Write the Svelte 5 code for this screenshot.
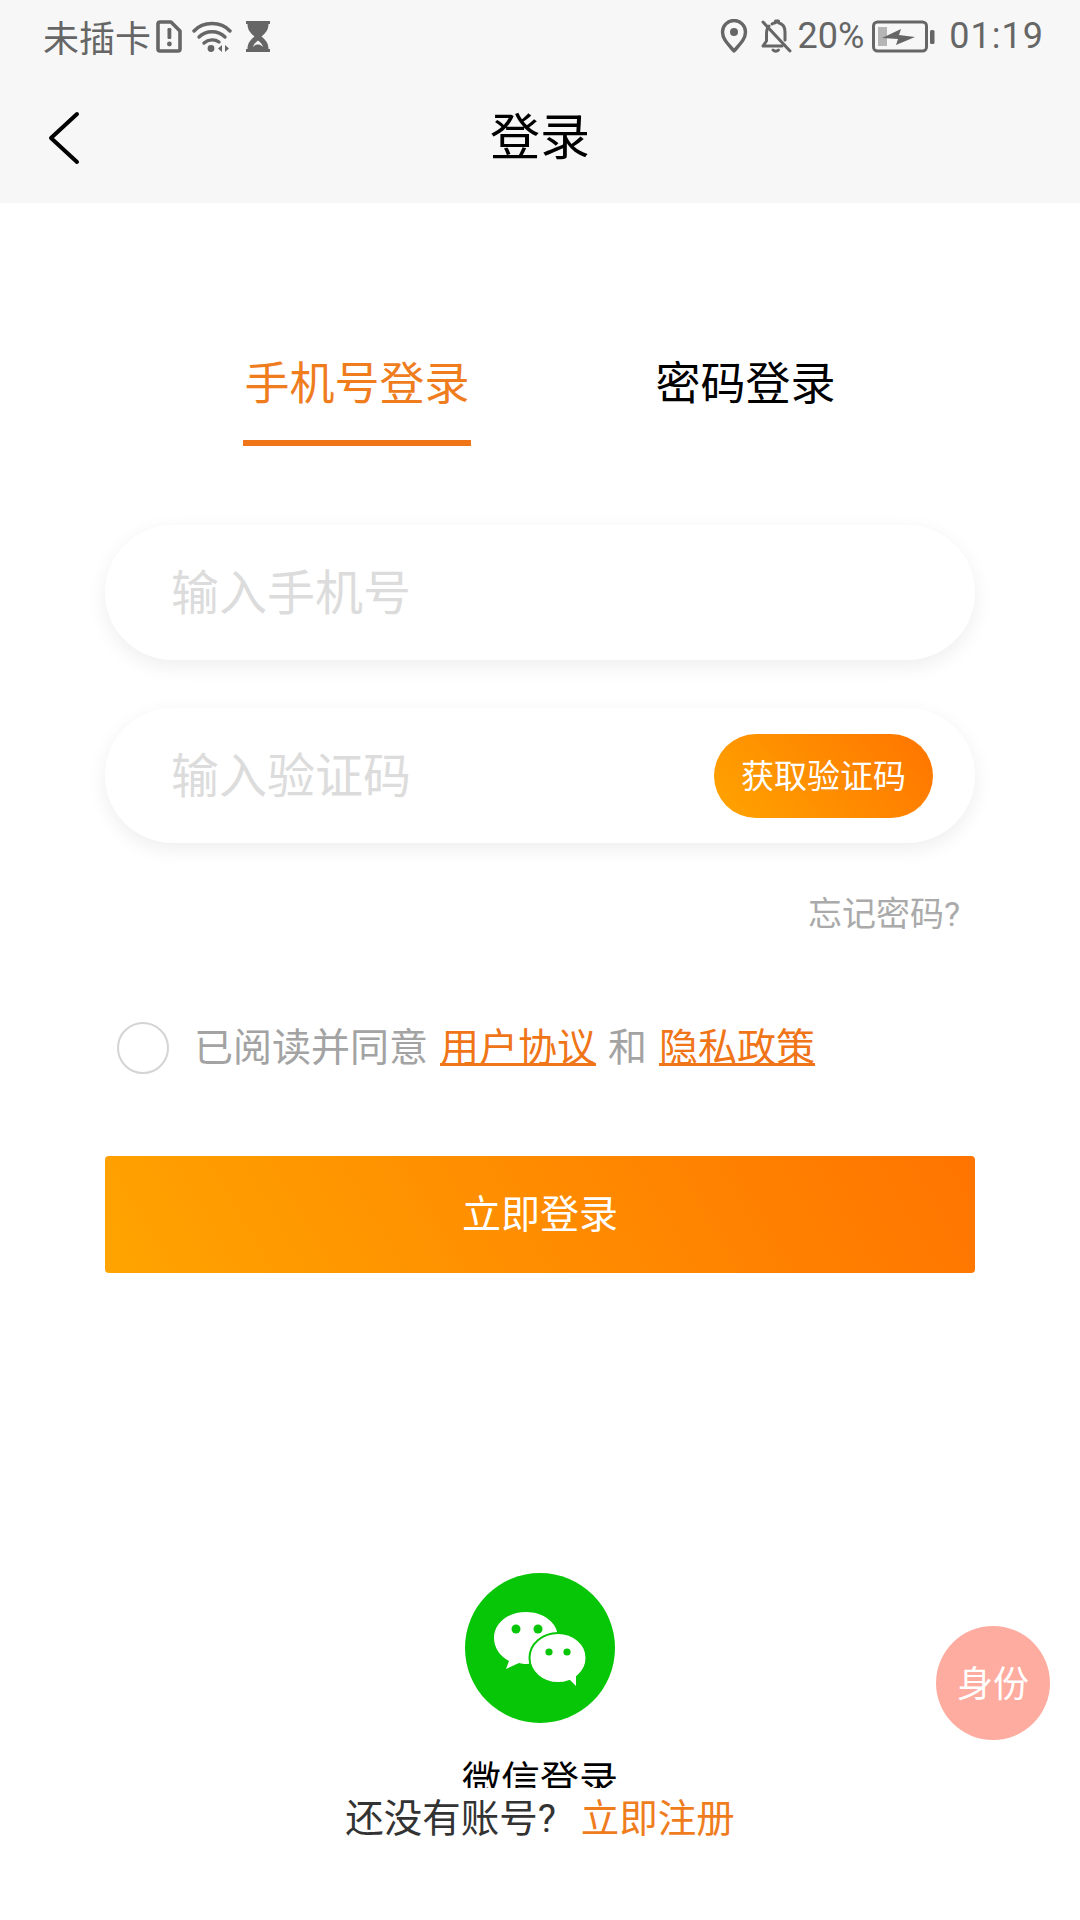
<script>
let phone = $state('');
let code = $state('');
let agreed = $state(false);
let mode = $state('phone');
</script>

<div class="page">
    <div class="topbar">
        <div class="status">
            <span class="carrier">未插卡</span>
            <svg class="ic sim" viewBox="0 0 26 33" width="26" height="33">
                <path d="M4 2h11l9 9v18a2 2 0 0 1-2 2H4a2 2 0 0 1-2-2V4a2 2 0 0 1 2-2z" fill="none" stroke="#666" stroke-width="3.600" stroke-linejoin="round"/>
                <rect x="11.500" y="8" width="3.800" height="11" rx="1.200" fill="#666"/>
                <circle cx="13.400" cy="24" r="2.400" fill="#666"/>
            </svg>
            <svg class="ic wifi" viewBox="0 0 40 33" width="40" height="33">
                <g fill="none" stroke="#666" stroke-width="3.400" stroke-linecap="round">
                    <path d="M2 11C11 1 29 1 38 11"/>
                    <path d="M7 17c7-7 19-7 26 0"/>
                    <path d="M12 23c4.500-4 11-4 15-1"/>
                </g>
                <circle cx="19" cy="28.500" r="3.400" fill="#666"/>
                <path d="M30 25v7l-4-3.500zM33 25v7l4-3.500z" fill="#666"/>
            </svg>
            <svg class="ic glass" viewBox="0 0 26 33" width="26" height="33">
                <path d="M1 1h24v3h-1.500c0 6-3 9-7 12.500 4 3.500 7 6.500 7 12.500H25v3H1v-3h1.500c0-6 3-9 7-12.500-4-3.500-7-6.500-7-12.500H1z" fill="#666"/>
                <path d="M13 20.500c-2.500 2-4.500 4-5 6.500 2-2 3.500-2.500 5-2.500s3 .5 5 2.500c-.5-2.500-2.500-4.500-5-6.500z" fill="#f7f7f7"/>
            </svg>
            <span class="spacer"></span>
            <svg class="ic pin" viewBox="0 0 28 34" width="28" height="34">
                <path d="M14 32C8 25 2.500 20 2.500 13a11.500 11.500 0 0 1 23 0C25.500 20 20 25 14 32z" fill="none" stroke="#666" stroke-width="3.400" stroke-linejoin="round"/>
                <circle cx="14" cy="13" r="4" fill="#666"/>
            </svg>
            <svg class="ic bell" viewBox="0 0 32 34" width="32" height="34">
                <g fill="none" stroke="#666" stroke-width="3" stroke-linecap="round" stroke-linejoin="round">
                    <path d="M9 7c-2 2-2.500 5-2.500 8v7L3 27h19"/>
                    <path d="M12 5c1-.6 2-1 3.500-1.200V2h3v1.800c4 1 6.500 4.500 6.500 9.200v8"/>
                    <path d="M3 3l27 29"/>
                    <path d="M13 31c1.500 1.500 4 1.500 5.500 0"/>
                </g>
            </svg>
            <span class="pct">20%</span>
            <svg class="ic batt" viewBox="0 0 63 33" width="63" height="33">
                <rect x="1.500" y="2" width="53" height="29" rx="4" fill="none" stroke="#666" stroke-width="3"/>
                <rect x="6" y="7" width="9" height="19" fill="#b5b5b5"/>
                <path d="M10 18L29 9l-2 6 16 2-19 8 2-6z" fill="#666"/>
                <rect x="58" y="10" width="4.500" height="14" rx="1.500" fill="#666"/>
            </svg>
            <span class="time">01:19</span>
        </div>
        <div class="nav">
            <svg class="back" viewBox="0 0 34 54" width="34" height="54">
                <path d="M30 3L4 27l26 24" fill="none" stroke="#000" stroke-width="4" stroke-linecap="round" stroke-linejoin="round"/>
            </svg>
            <span class="title">登录</span>
        </div>
    </div>

    <div class="tabs">
        <button class="tab" class:on={mode === 'phone'} onclick={() => mode = 'phone'}>手机号登录</button>
        <button class="tab" class:on={mode === 'pwd'} onclick={() => mode = 'pwd'}>密码登录</button>
    </div>

    <div class="form">
        <div class="field">
            <input type="text" placeholder="输入手机号" bind:value={phone}/>
        </div>
        <div class="field second">
            <input type="text" placeholder="输入验证码" bind:value={code}/>
            <button class="getcode">获取验证码</button>
        </div>
        <div class="forgot">忘记密码?</div>
        <div class="agree">
            <button class="check" class:checked={agreed} aria-label="同意" onclick={() => agreed = !agreed}></button>
            <span class="hint">已阅读并同意</span>
            <span class="link">用户协议</span>
            <span class="hint">和</span>
            <span class="link">隐私政策</span>
        </div>
        <button class="login">立即登录</button>
    </div>

    <div class="wechat">
        <svg viewBox="0 0 150 150" width="150" height="150">
            <circle cx="75" cy="75" r="75" fill="#07c507"/>
            <path d="M61 39c-18 0-32 11-32 26 0 10 6 18 15 23l-3 8 13-6c3 .8 5 1 7 1 18 0 32-11 32-26S79 39 61 39z" fill="#fff"/>
            <ellipse cx="93" cy="85" rx="28.500" ry="25" fill="#fff" stroke="#07c507" stroke-width="2"/>
            <path d="M104 106l7 7 0-11z" fill="#fff"/>
            <circle cx="51" cy="56" r="4.500" fill="#07c507"/>
            <circle cx="73" cy="56" r="4.500" fill="#07c507"/>
            <circle cx="84" cy="79" r="3.600" fill="#07c507"/>
            <circle cx="102" cy="79" r="3.600" fill="#07c507"/>
        </svg>
        <div class="wxlabel">微信登录</div>
    </div>

    <div class="register">
        <span>还没有账号?</span>
        <span class="reg">立即注册</span>
    </div>

    <div class="fab">身份</div>
</div>

<style>
    :global(body) {
        margin: 0;
        background: #fff;
    }
    .page {
        position: relative;
        width: 1080px;
        height: 1920px;
        overflow: hidden;
        background: #fff;
        font-family: Roboto, "Noto Sans CJK SC", sans-serif;
    }
    .topbar {
        background: #f7f7f7;
        height: 203px;
    }
    .status {
        display: flex;
        align-items: center;
        height: 72px;
        padding: 0 36px 0 43px;
        color: #666;
        font-size: 36px;
        box-sizing: border-box;
    }
    .ic {
        display: block;
        flex: none;
    }
    .sim { margin-left: 5px; }
    .wifi { margin-left: 10px; }
    .glass { margin-left: 13px; }
    .spacer { flex: 1; }
    .bell { margin-left: 12px; }
    .pct { margin-left: 6px; font-size: 36px; }
    .batt { margin-left: 8px; }
    .time { margin-left: 14px; font-size: 36px; letter-spacing: 1px; }
    .nav {
        position: relative;
        display: flex;
        align-items: center;
        justify-content: center;
        height: 131px;
    }
    .back {
        position: absolute;
        left: 47px;
        top: 39px;
    }
    .title {
        font-size: 50px;
        color: #000;
        line-height: 60px;
    }
    .tabs {
        display: flex;
        justify-content: center;
        gap: 184px;
        padding-top: 152px;
    }
    button {
        font-family: inherit;
        border: none;
        background: none;
        padding: 0;
    }
    .tab {
        font-size: 45px;
        line-height: 60px;
        padding: 0 1px 25px;
        border-bottom: 6px solid transparent;
        color: #000;
    }
    .tab.on {
        color: #ef7d1e;
        border-bottom-color: #ef7518;
    }
    .form {
        margin: 79px 105px 0;
    }
    .field {
        display: flex;
        align-items: center;
        height: 135px;
        border-radius: 68px;
        background: #fff;
        box-shadow: 0 6px 20px rgba(0, 0, 0, 0.07);
        padding: 0 42px 0 66px;
        box-sizing: border-box;
    }
    .second {
        margin-top: 48px;
    }
    input {
        flex: 1;
        min-width: 0;
        border: none;
        outline: none;
        background: transparent;
        font-family: inherit;
        font-size: 48px;
        color: #333;
        padding: 2px 0 0;
    }
    input::placeholder {
        color: #dcdcdc;
    }
    .getcode {
        width: 219px;
        height: 84px;
        padding-bottom: 4px;
        border-radius: 42px;
        color: #fff;
        font-size: 33px;
        background: linear-gradient(50deg, #ffa400, #ff7400);
    }
    .forgot {
        margin-top: 50px;
        padding-right: 15px;
        text-align: right;
        color: #aaa;
        font-size: 34px;
        line-height: 42px;
    }
    .agree {
        display: flex;
        align-items: center;
        gap: 12px;
        height: 52px;
        margin-top: 87px;
        padding-left: 12px;
        font-size: 39px;
    }
    .agree span {
        margin-bottom: 8px;
    }
    .check {
        width: 52px;
        height: 52px;
        border-radius: 50%;
        border: 2px solid #d4d4d4;
        box-sizing: border-box;
        margin-right: 13px;
    }
    .check.checked {
        background: #ef7518;
    }
    .hint {
        color: #a3a3a3;
    }
    .link {
        color: #ef7518;
        text-decoration: underline;
        text-decoration-thickness: 3px;
    }
    .login {
        display: block;
        width: 100%;
        height: 117px;
        padding-bottom: 8px;
        margin-top: 82px;
        border-radius: 4px;
        color: #fff;
        font-size: 39px;
        background: linear-gradient(60deg, #ffa400, #ff7400);
    }
    .wechat {
        display: flex;
        flex-direction: column;
        align-items: center;
        height: 215px;
        margin-top: 300px;
        overflow: hidden;
    }
    .wechat svg {
        display: block;
        flex: none;
    }
    .wxlabel {
        margin-top: 33px;
        font-size: 39px;
        line-height: 50px;
        color: #000;
    }
    .register {
        display: flex;
        justify-content: center;
        gap: 25px;
        font-size: 38.500px;
        line-height: 62px;
        color: #333;
    }
    .reg {
        color: #ef7d1e;
    }
    .fab {
        position: absolute;
        left: 936px;
        top: 1626px;
        width: 114px;
        height: 114px;
        padding-bottom: 4px;
        box-sizing: border-box;
        border-radius: 50%;
        background: #ffaca0;
        color: #fff;
        font-size: 36px;
        display: flex;
        align-items: center;
        justify-content: center;
    }
</style>
